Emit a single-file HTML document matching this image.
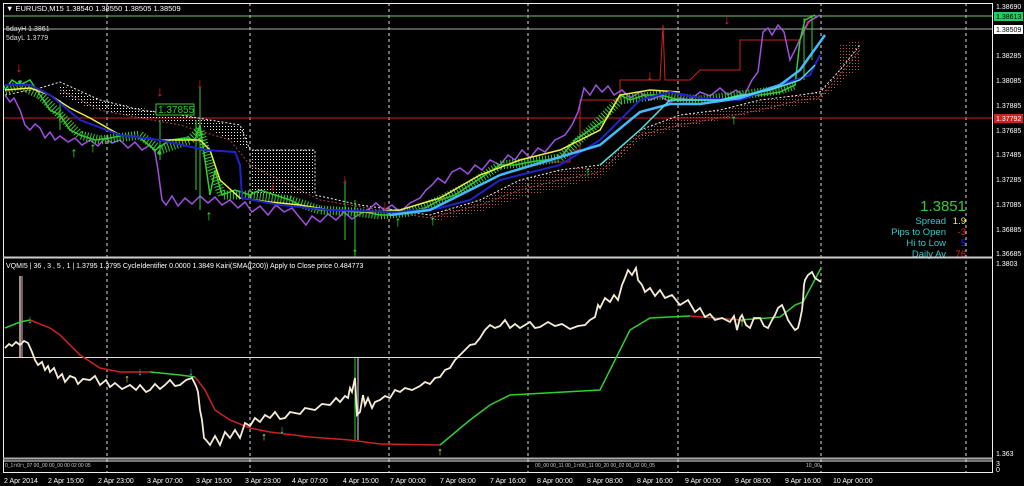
<!DOCTYPE html>
<html><head><meta charset="utf-8"><style>
html,body{margin:0;padding:0;background:#000;width:1024px;height:486px;overflow:hidden}
svg{display:block}
text{font-family:"Liberation Sans",sans-serif}
</style></head><body>
<svg width="1024" height="486" viewBox="0 0 1024 486" xmlns="http://www.w3.org/2000/svg">
<defs>
<pattern id="wd" width="3" height="3" patternUnits="userSpaceOnUse"><rect width="1" height="1" fill="#eee"/></pattern>
<pattern id="rd" width="3" height="3" patternUnits="userSpaceOnUse"><rect width="1" height="1" fill="#b55"/></pattern>
</defs>
<rect width="1024" height="486" fill="#000"/>
<g stroke="#ddd" stroke-width="1" stroke-dasharray="3,3">
<line x1="107" y1="3" x2="107" y2="472"/>
<line x1="250" y1="3" x2="250" y2="472"/>
<line x1="389" y1="3" x2="389" y2="472"/>
<line x1="528" y1="3" x2="528" y2="472"/>
<line x1="678" y1="3" x2="678" y2="472"/>
<line x1="821" y1="3" x2="821" y2="472"/>
<line x1="966" y1="3" x2="966" y2="472"/>
</g>
<line x1="4" y1="16" x2="992" y2="16" stroke="#6c6" stroke-width="1"/>
<line x1="4" y1="29" x2="992" y2="29" stroke="#aaa" stroke-width="1"/>
<line x1="4" y1="118" x2="992" y2="118" stroke="#c22" stroke-width="1"/>
<!-- cloud fills -->
<polygon fill="url(#wd)" points="252,150 315,150 315,195 252,195"/>
<polygon fill="url(#wd)" points="60,85 100,100 140,108 180,113 230,125 245,128 250,150 200,125 140,118 90,108 60,95"/>
<polygon fill="url(#rd)" points="430,215 480,200 520,180 560,170 600,165 640,130 680,115 720,110 760,100 800,95 820,92 840,70 860,45 860,60 840,85 820,100 800,105 760,112 720,120 680,128 640,140 600,178 560,188 520,198 480,212 430,222"/>
<polygon fill="url(#rd)" points="840,45 860,40 860,70 840,80"/>
<g fill="none" stroke-dasharray="2,2" stroke-width="1">
<polyline stroke="#eee" points="5,95 40,88 60,82 100,100 140,110 180,115 240,125 250,150 315,150 315,195 360,205 430,215 480,200 520,180 560,170 600,165 640,130 680,115 720,110 760,100 800,95 820,92 840,70 860,45"/>
<polyline stroke="#a44" points="60,90 100,110 140,118 180,125 230,140 250,165 320,200 380,210 430,218 480,205 520,190 560,180 600,172 640,135 680,125 720,118 760,110 800,100 820,98 840,75 860,50"/>
</g>
<polyline fill="none" stroke="#c22" points="550,162 570,162 570,150 580,150 580,100 620,100 620,80 660,80 663,25 665,80 690,80 700,70 740,70 740,40 800,40 810,20 820,15"/>
<!-- purple -->
<polyline fill="none" stroke="#a050e0" stroke-width="1.5" points="5,95 10,102 14,98 20,110 25,125 30,130 35,124 40,128 45,138 50,132 55,140 60,136 68,142 75,138 82,145 90,140 98,146 105,138 112,143 120,140 128,148 135,142 142,150 150,145 155,152 158,170 162,200 166,205 172,196 178,206 185,198 192,204 200,196 208,203 215,197 222,205 230,200 238,208 245,202 252,212 260,206 268,215 276,205 284,212 292,208 300,218 306,225 312,216 320,222 328,214 336,220 344,212 352,219 360,214 368,210 376,203 384,210 392,205 400,212 410,203 420,198 426,190 432,185 438,178 445,183 452,172 460,168 468,174 475,165 482,170 490,160 500,165 508,155 515,160 522,150 530,158 538,148 545,152 555,140 565,135 572,125 578,112 584,88 590,95 596,85 602,92 608,86 614,95 622,90 630,98 640,92 650,100 660,96 670,102 680,98 690,100 700,92 710,96 720,88 728,95 736,90 744,96 752,80 758,72 763,32 768,28 772,35 778,25 784,32 790,60 796,48 802,35 808,22 815,18 820,15"/>
<!-- green candles as bars -->
<polyline fill="none" stroke="#3c3" stroke-width="9" stroke-dasharray="1,2" points="5,90 20,85 40,95 60,115 80,135 100,140 140,135 160,150 190,140 200,130 210,165 222,195 250,195 290,200 320,210 355,212 380,215 410,212 440,200 470,185 500,165 530,162 560,158 590,130 620,100 660,95 700,100 740,95 780,90 795,85"/>
<polyline fill="none" stroke="#3c3" stroke-width="1.5" points="5,90 12,80 20,85 30,80 40,95 50,110 60,115 70,130 80,135 95,140 110,138 125,135 140,138 155,150 170,140 185,138 195,140 200,125 205,160 210,195 215,170 222,195 235,190 250,195 260,190 275,195 290,200 300,205 320,210 340,210 355,212 365,212 380,215 395,215 410,212 425,208 440,200 455,195 470,185 485,175 500,165 515,165 530,162 545,160 560,158 575,140 590,130 605,120 620,95 630,100 645,95 660,95 680,100 700,100 720,100 740,95 760,95 780,92 795,85 800,40 805,20 815,15"/>
<g stroke="#3c3" stroke-width="1"><line x1="200" y1="88" x2="200" y2="210"/><line x1="345" y1="180" x2="345" y2="240"/><line x1="355" y1="200" x2="355" y2="255"/><line x1="196" y1="120" x2="196" y2="190"/><line x1="160" y1="120" x2="160" y2="160"/><line x1="60" y1="100" x2="60" y2="130"/><line x1="804" y1="18" x2="804" y2="80"/><line x1="812" y1="15" x2="812" y2="60"/></g>
<polyline fill="none" stroke="#ee4" stroke-width="1.5" points="5,90 30,88 50,95 70,108 90,118 120,135 160,140 200,140 210,150 220,180 240,198 270,202 300,205 330,210 370,212 400,210 440,198 480,175 520,160 560,150 600,130 620,95 650,90 680,92"/>
<polyline fill="none" stroke="#22c" stroke-width="2" points="5,85 30,85 50,95 80,120 120,135 160,140 205,150 235,152 240,165 242,198 280,205 330,210 400,212 440,208 470,200 500,180 560,165 600,140 640,100 670,92 700,98 740,100 780,85 810,75 820,55"/>
<polyline fill="none" stroke="#4bf" stroke-width="2.5" points="390,215 430,210 470,190 500,175 550,160 600,145 640,112 670,104 700,104 740,98 780,85 800,70 825,35"/>
<polyline fill="none" stroke="#5dd" stroke-width="1.5" points="600,165 640,130 670,100 720,100 770,90 800,80 815,65"/>
<g font-size="14" font-weight="bold" text-anchor="middle">
<text x="19" y="72" fill="#e22">↓</text><text x="200" y="88" fill="#e22">↓</text><text x="345" y="184" fill="#e22">↓</text><text x="650" y="80" fill="#e22">↓</text><text x="727" y="24" fill="#e22">↓</text><text x="808" y="24" fill="#e22">↓</text><text x="385" y="210" fill="#e22">↓</text><text x="273" y="190" fill="#e22">↓</text><text x="160" y="96" fill="#e22">↓</text>
<text x="74" y="157" fill="#3e3">↑</text><text x="93" y="152" fill="#3e3">↑</text><text x="209" y="220" fill="#3e3">↑</text><text x="355" y="257" fill="#3e3">↑</text><text x="398" y="226" fill="#3e3">↑</text><text x="734" y="124" fill="#3e3">↑</text><text x="433" y="225" fill="#3e3">↑</text><text x="588" y="176" fill="#3e3">↑</text>
</g>
<rect x="156" y="104" width="38" height="11" fill="#000" stroke="#3c3"/>
<text x="158" y="113" font-size="10" fill="#3c3">1.37855</text>
<text x="6" y="11" font-size="7.5" fill="#fff">▼ EURUSD,M15  1.38540 1.38550 1.38505 1.38509</text>
<text x="6" y="31" font-size="7" fill="#ddd">5dayH 1.3861</text>
<text x="6" y="40" font-size="7" fill="#ddd">5dayL 1.3779</text>
<text x="966" y="211" font-size="15" fill="#3c3" text-anchor="end">1.3851</text>
<g font-size="9.5" text-anchor="end">
<text x="946" y="224" fill="#3cc">Spread</text><text x="966" y="224" fill="#ee4">1.9</text>
<text x="946" y="235" fill="#3cc">Pips to Open</text><text x="966" y="235" fill="#e22">-3</text>
<text x="946" y="246" fill="#3cc">Hi to Low</text><text x="966" y="246" fill="#22d">5</text>
<text x="946" y="257" fill="#3cc">Daily Av</text><text x="966" y="257" fill="#d22">76</text>
</g>
<rect x="3.5" y="3.5" width="989" height="469" fill="none" stroke="#eee"/>
<line x1="3" y1="257.5" x2="993" y2="257.5" stroke="#ccc" stroke-width="2"/>
<line x1="3" y1="458.5" x2="993" y2="458.5" stroke="#aaa" stroke-width="2"/>
<line x1="3" y1="461" x2="993" y2="461" stroke="#eee"/>
<g font-size="7" fill="#fff">
<text x="996" y="9">1.38690</text><text x="996" y="58">1.38285</text><text x="996" y="83">1.38085</text><text x="996" y="108">1.37885</text><text x="996" y="133">1.37685</text><text x="996" y="157">1.37485</text><text x="996" y="182">1.37285</text><text x="996" y="207">1.37085</text><text x="996" y="232">1.36885</text><text x="996" y="256">1.36685</text><text x="996" y="266">1.3803</text><text x="996" y="456">1.363</text><text x="996" y="466">3</text><text x="996" y="472">0</text>
</g>
<rect x="994" y="12" width="29" height="9" fill="#2c6"/><text x="996" y="19" font-size="7" fill="#000">1.38613</text>
<rect x="994" y="25" width="29" height="9" fill="#fff"/><text x="996" y="32" font-size="7" fill="#000">1.38509</text>
<rect x="994" y="114" width="29" height="9" fill="#c22"/><text x="996" y="121" font-size="7" fill="#fff">1.37792</text>
<text x="6" y="268" font-size="7" fill="#fff">VQMI5 | 36 , 3 , 5 , 1 |  1.3795 1.3795  CycleIdentifier 0.0000 1.3849  Kairi(SMA((200)) Apply to Close price 0.484773</text>
<line x1="4" y1="357.5" x2="821" y2="357.5" stroke="#ddd"/>
<line x1="20" y1="276" x2="20" y2="357" stroke="#dbb" stroke-width="1.5"/>
<line x1="22" y1="276" x2="22" y2="357" stroke="#dbb" stroke-width="1"/>
<line x1="355" y1="358" x2="355" y2="440" stroke="#3c3"/><line x1="358" y1="358" x2="358" y2="440" stroke="#ddd"/>
<polyline fill="none" stroke="#3c3" stroke-width="1.5" points="5,328 20,322 30,320"/>
<polyline fill="none" stroke="#c22" stroke-width="1.5" points="30,320 50,328 60,335 80,355 100,368 120,372 150,372"/>
<polyline fill="none" stroke="#3c3" stroke-width="1.5" points="150,372 180,375 195,377"/>
<polyline fill="none" stroke="#c22" stroke-width="1.5" points="195,377 205,390 215,410 230,420 250,428 270,432 310,437 350,440 380,444 440,445"/>
<polyline fill="none" stroke="#3c3" stroke-width="1.5" points="440,445 470,420 490,405 510,395 600,390 615,360 630,330 650,318 690,316"/>
<polyline fill="none" stroke="#c22" stroke-width="1.5" points="690,316 740,320"/>
<polyline fill="none" stroke="#3c3" stroke-width="1.5" points="740,320 780,317 795,305 803,302 812,285 821,268"/>
<polyline fill="none" stroke="#f5ecd8" stroke-width="1.8" points="5,348 9,344 12,346 16,342 20,345 24,341 28,343 32,352 35,360 38,365 42,362 45,370 48,366 50,372 54,368 58,378 62,374 65,382 70,376 75,378 78,384 83,379 90,380 95,376 100,385 106,380 110,387 115,383 122,389 130,385 136,390 140,385 146,392 150,390 155,384 160,389 165,385 170,380 175,386 180,385 186,380 192,378 196,386 198,392 200,410 202,420 204,438 206,440 210,445 215,436 220,445 225,432 230,438 235,430 240,438 245,423 250,426 255,418 260,422 265,415 270,418 275,412 280,419 285,418 290,412 300,414 305,408 315,410 322,404 330,405 336,398 340,402 345,396 348,398 350,388 352,392 355,378 357,415 360,412 363,395 365,405 368,398 372,408 375,402 380,400 385,396 390,398 395,390 400,392 405,388 412,390 420,386 425,382 430,384 435,378 440,377 445,370 450,368 455,360 460,355 465,350 470,345 475,344 480,338 485,330 490,325 495,328 500,326 505,320 510,328 515,324 520,328 525,325 530,322 535,328 540,327 548,322 555,326 562,324 570,329 578,326 585,325 590,320 595,317 598,305 600,308 605,298 610,302 614,295 618,300 622,285 625,278 628,270 632,275 636,268 638,280 642,285 645,292 650,288 655,296 660,290 665,298 672,295 680,305 688,300 695,312 700,308 705,317 710,314 715,320 722,318 730,322 734,316 737,330 740,318 742,315 746,325 750,328 754,318 760,318 764,326 768,328 772,320 775,315 778,308 782,305 785,312 788,320 792,326 795,330 798,328 800,320 802,310 803,300 804,285 805,280 808,275 812,272 815,278 818,280 821,282"/>
<g font-size="11" font-weight="bold" text-anchor="middle"><text x="30" y="323" fill="#4cc">↓</text><text x="140" y="375" fill="#4cc">↓</text><text x="191" y="375" fill="#4cc">↓</text><text x="282" y="433" fill="#4cc">↓</text><text x="127" y="382" fill="#ee4">↑</text><text x="264" y="440" fill="#ee4">↑</text><text x="440" y="455" fill="#ee4">↑</text><text x="742" y="326" fill="#ee4">↑</text></g>
<g font-size="5" fill="#ccc"><text x="5" y="467">0_1⊓0⊓_07 00_00 00_00 00 02 00 05</text><text x="535" y="467">00_00 00_11 00_1⊓00_11 00_20 00_02 00_02 00_05</text><text x="806" y="467">10_00</text></g>
<g font-size="7" fill="#fff">
<text x="4" y="483">2 Apr 2014</text><text x="48" y="483">2 Apr 15:00</text><text x="98" y="483">2 Apr 23:00</text><text x="147" y="483">3 Apr 07:00</text><text x="196" y="483">3 Apr 15:00</text><text x="245" y="483">3 Apr 23:00</text><text x="292" y="483">4 Apr 07:00</text><text x="343" y="483">4 Apr 15:00</text><text x="390" y="483">7 Apr 00:00</text><text x="440" y="483">7 Apr 08:00</text><text x="490" y="483">7 Apr 16:00</text><text x="537" y="483">8 Apr 00:00</text><text x="587" y="483">8 Apr 08:00</text><text x="637" y="483">8 Apr 16:00</text><text x="685" y="483">9 Apr 00:00</text><text x="735" y="483">9 Apr 08:00</text><text x="785" y="483">9 Apr 16:00</text><text x="833" y="483">10 Apr 00:00</text>
</g>
</svg>
</body></html>
